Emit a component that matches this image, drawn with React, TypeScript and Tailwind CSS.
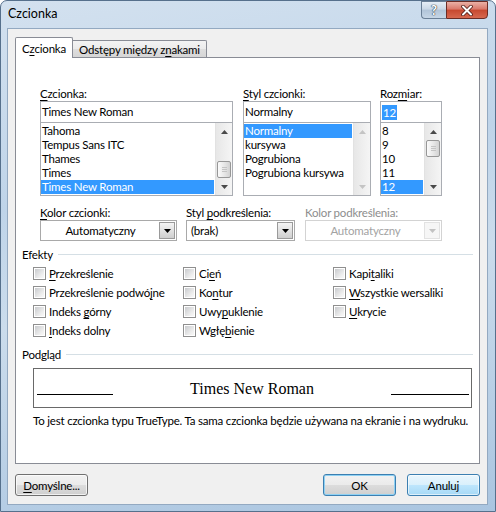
import React from "react";

const SANS = "font-['Lato','Noto_Sans',sans-serif]";

function Acc({ t, i }: { t: string; i: number }) {
  if (i < 0) return <>{t}</>;
  return (
    <>
      {t.slice(0, i)}
      <span className="underline decoration-1 underline-offset-[2px]">{t[i]}</span>
      {t.slice(i + 1)}
    </>
  );
}

function Tri({ up, color }: { up?: boolean; color: string }) {
  return (
    <svg width="7" height="4" viewBox="0 0 7 4">
      <path d={up ? "M0 4L3.5 0L7 4Z" : "M0 0L3.5 4L7 0Z"} fill={color} />
    </svg>
  );
}

function Thumb() {
  return (
    <div className="h-[17px] mx-px rounded-[2px] border border-[#979797] bg-[linear-gradient(to_right,#fbfbfb,#e4e4e4_60%,#d2d2d2)] flex flex-col items-center justify-center gap-px">
      <div className="w-[5px] h-px bg-[#c4c4c4]" />
      <div className="w-[5px] h-px bg-[#c4c4c4]" />
      <div className="w-[5px] h-px bg-[#c4c4c4]" />
    </div>
  );
}

function VScroll({ thumb, disabled }: { thumb: "top" | "bottom" | "none"; disabled?: boolean }) {
  const c = disabled ? "#c4c4c4" : "#4a4a4a";
  return (
    <div className="w-[17px] h-full flex flex-col bg-[linear-gradient(to_right,#e7e7e7,#f5f5f5)] border-l border-[#e2e2e2]">
      <div className="h-[17px] flex items-center justify-center">
        <Tri up color={c} />
      </div>
      <div className="flex-1 flex flex-col">
        {thumb === "bottom" && <div className="flex-1" />}
        {thumb !== "none" && <Thumb />}
      </div>
      <div className="h-[17px] flex items-center justify-center">
        <Tri color={c} />
      </div>
    </div>
  );
}

function ListBox({
  items,
  sel,
  thumb,
  disabled,
}: {
  items: string[];
  sel: number;
  thumb: "top" | "bottom" | "none";
  disabled?: boolean;
}) {
  return (
    <div className="h-[74px] -mt-px border border-[#aaadb3] bg-white flex">
      <div className="flex-1 pt-px pr-px">
        {items.map((it, k) => (
          <div
            key={k}
            className={`h-[14px] leading-[14px] pl-px whitespace-nowrap ${
              k === sel ? "bg-[#3399ff] text-white" : ""
            }`}
          >
            {it}
          </div>
        ))}
      </div>
      <VScroll thumb={thumb} disabled={disabled} />
    </div>
  );
}

function Label({ t, i, disabled }: { t: string; i: number; disabled?: boolean }) {
  return (
    <div className={`h-[15px] leading-[15px] whitespace-nowrap ${disabled ? "text-[#8d8d8d]" : ""}`}>
      <Acc t={t} i={i} />
    </div>
  );
}

function Combo({ text, center, disabled }: { text: string; center?: boolean; disabled?: boolean }) {
  return (
    <div
      className={`h-[21px] border ${
        disabled ? "border-[#d3d3d3]" : "border-[#a9a9a9]"
      } bg-white flex items-stretch p-px`}
    >
      <div
        className={`flex-1 flex items-center whitespace-nowrap ${center ? "justify-center" : "pl-[3px]"} ${
          disabled ? "text-[#a3a3a3]" : ""
        }`}
      >
        {text}
      </div>
      <div
        className={`w-[16px] border flex items-center justify-center ${
          disabled
            ? "border-[#e2e2e2] bg-[#f6f6f6]"
            : "border-[#9a9a9a] bg-[linear-gradient(to_bottom,#f4f4f4,#e2e2e2_50%,#cfcfcf)]"
        }`}
      >
        <Tri color={disabled ? "#c2c2c2" : "#000"} />
      </div>
    </div>
  );
}

function Check({ t, i }: { t: string; i: number }) {
  return (
    <div className="h-[19px] flex items-center gap-[3px] whitespace-nowrap">
      <div className="w-[13px] h-[13px] border border-[#8f8f8f] bg-white p-px shrink-0">
        <div className="w-full h-full bg-[linear-gradient(135deg,#c9cbce,#eeeeee_70%,#f8f8f8)]" />
      </div>
      <span className="leading-[15px]">
        <Acc t={t} i={i} />
      </span>
    </div>
  );
}

function Btn({
  children,
  kind,
}: {
  children: React.ReactNode;
  kind: "normal" | "default" | "hover";
}) {
  const cls =
    kind === "normal"
      ? "border-[#707070] bg-[linear-gradient(to_bottom,#f2f2f2_0%,#ebebeb_50%,#dddddd_50%,#cfcfcf_100%)]"
      : kind === "default"
      ? "border-[#3c7fb1] bg-[linear-gradient(to_bottom,#f2f2f2_0%,#ebebeb_50%,#dddddd_50%,#cfcfcf_100%)] shadow-[inset_0_0_0_1px_#8fd1f3]"
      : "border-[#3c7fb1] bg-[linear-gradient(to_bottom,#eaf6fd_0%,#d9f0fc_50%,#bee6fd_50%,#a7d9f5_100%)] shadow-[inset_0_0_0_1px_rgba(255,255,255,0.6)]";
  return (
    <div
      className={`w-[73px] h-[22px] rounded-[3px] border flex items-center justify-center leading-[15px] ${
        kind === "normal" ? "shadow-[inset_0_0_0_1px_rgba(255,255,255,0.7)]" : ""
      } ${cls}`}
    >
      {children}
    </div>
  );
}

function GroupHead({ t }: { t: string }) {
  return (
    <div className="h-[15px] flex items-center">
      <span className="leading-[15px]">{t}</span>
      <div className="flex-1 h-px bg-[#d5dfe5] ml-[5px]" />
    </div>
  );
}

export default function App() {
  return (
    <div
      className={`${SANS} text-[11.5px] tracking-[-0.2px] text-black w-[496px] h-[512px] overflow-hidden rounded-t-[7px] border border-[#56708c] bg-[linear-gradient(170deg,#d3e1ef_0%,#bfd4e9_35%,#cbdcec_55%,#aac5e0_100%)] flex flex-col`}
    >
      {/* Title bar */}
      <div className="h-[27px] flex items-start shrink-0">
        <div className="pl-[7px] h-[26px] flex items-center text-[12.5px] leading-[18px] tracking-normal">Czcionka</div>
        <div className="ml-auto mr-[7px] flex">
          <div className="w-[25px] h-[18px] rounded-bl-[4px] border border-[#6a7f96] border-r-0 bg-[linear-gradient(to_bottom,#e6eef6_0%,#cad8e6_45%,#b1c4d8_50%,#c6d6e6_100%)] flex items-center justify-center text-white font-bold text-[13px] leading-[13px] [text-shadow:0_0_1px_#34404c,0_0_1px_#34404c,0_0_1px_#34404c]">
            ?
          </div>
          <div className="w-[42px] h-[18px] rounded-br-[4px] border border-[#6b2c25] bg-[linear-gradient(to_bottom,#eab1a6_0%,#d9786a_45%,#c7482f_50%,#d7684f_100%)] flex items-center justify-center">
            <svg width="14" height="11" viewBox="0 0 14 11">
              <path d="M3 1.5L11 9.5M11 1.5L3 9.5" stroke="#4d1a14" strokeWidth="3.6" strokeLinecap="round" />
              <path d="M3 1.5L11 9.5M11 1.5L3 9.5" stroke="#ffffff" strokeWidth="2" strokeLinecap="round" />
            </svg>
          </div>
        </div>
      </div>

      {/* Client area */}
      <div className="ml-[6px] w-[481px] h-[477px] shrink-0 border border-[#93a9c1] bg-[#f0f0f0] pl-[7px] pt-[8px] flex flex-col">
        {/* Tabs */}
        <div className="h-[20px] flex items-end">
          <div className="relative z-10 w-[58px] h-[21px] -mb-px border border-b-0 border-[#898c95] rounded-t-[2px] bg-white flex items-center justify-center leading-[15px]">
            <Acc t="Czcionka" i={1} />
          </div>
          <div className="w-[134px] h-[17px] border border-b-0 border-l-0 border-[#898c95] rounded-tr-[2px] bg-[linear-gradient(to_bottom,#f3f3f3,#ebebeb_50%,#dedede_50%,#d6d6d6)] flex items-center justify-center leading-[15px] whitespace-nowrap">
            <Acc t="Odstępy między znakami" i={16} />
          </div>
        </div>

        {/* Panel */}
        <div className="w-[465px] h-[407px] border border-[#898c95] bg-white px-[6px] flex flex-col">
          {/* Row 1 */}
          <div className="mt-[28px] ml-[18px] flex">
            <div className="w-[193px]">
              <Label t="Czcionka:" i={0} />
              <div className="h-[22px] border border-[#aaadb3] bg-white flex items-center pl-px">Times New Roman</div>
              <ListBox
                items={["Tahoma", "Tempus Sans ITC", "Thames", "Times", "Times New Roman"]}
                sel={4}
                thumb="bottom"
              />
            </div>
            <div className="w-[128px] ml-[10px]">
              <Label t="Styl czcionki:" i={0} />
              <div className="h-[22px] border border-[#aaadb3] bg-white flex items-center pl-px">Normalny</div>
              <ListBox
                items={["Normalny", "kursywa", "Pogrubiona", "Pogrubiona kursywa"]}
                sel={0}
                thumb="none"
                disabled
              />
            </div>
            <div className="w-[62px] ml-[9px]">
              <Label t="Rozmiar:" i={3} />
              <div className="h-[22px] border border-[#aaadb3] bg-white flex items-center pl-px">
                <span className="bg-[#3399ff] text-white leading-[15px] px-px">12</span>
              </div>
              <ListBox items={["8", "9", "10", "11", "12"]} sel={4} thumb="top" />
            </div>
          </div>

          {/* Row 2 */}
          <div className="mt-[9px] ml-[18px] flex">
            <div className="w-[137px]">
              <Label t="Kolor czcionki:" i={0} />
              <Combo text="Automatyczny" center />
            </div>
            <div className="w-[109px] ml-[9px]">
              <Label t="Styl podkreślenia:" i={5} />
              <Combo text="(brak)" />
            </div>
            <div className="w-[137px] ml-[10px]">
              <Label t="Kolor podkreślenia:" i={-1} disabled />
              <Combo text="Automatyczny" center disabled />
            </div>
          </div>

          {/* Efekty */}
          <div className="mt-[6px]">
            <GroupHead t="Efekty" />
          </div>
          <div className="mt-[2px] ml-[11px] grid grid-cols-[150px_150px_1fr]">
            <div className="flex flex-col">
              <Check t="Przekreślenie" i={0} />
              <Check t="Przekreślenie podwójne" i={19} />
              <Check t="Indeks górny" i={7} />
              <Check t="Indeks dolny" i={0} />
            </div>
            <div className="flex flex-col">
              <Check t="Cień" i={2} />
              <Check t="Kontur" i={2} />
              <Check t="Uwypuklenie" i={3} />
              <Check t="Wgłębienie" i={4} />
            </div>
            <div className="flex flex-col">
              <Check t="Kapitaliki" i={4} />
              <Check t="Wszystkie wersaliki" i={0} />
              <Check t="Ukrycie" i={0} />
            </div>
          </div>

          {/* Podgląd */}
          <div className="mt-[7px]">
            <GroupHead t="Podgląd" />
          </div>
          <div className="mt-[6px] ml-[11px] mr-px h-[40px] border border-[#696969] bg-white flex items-start pl-[3px] pr-[2px]">
            <div className="w-[76px] h-px bg-black mt-[25px]" />
            <div className="flex-1 text-center font-['Liberation_Serif',serif] text-[16px] tracking-normal leading-[18px] pt-[11px] whitespace-nowrap">
              Times New Roman
            </div>
            <div className="w-[78px] h-px bg-black mt-[25px]" />
          </div>
          <div className="mt-[5px] ml-[11px] h-[15px] leading-[15px] whitespace-nowrap">
            To jest czcionka typu TrueType. Ta sama czcionka będzie używana na ekranie i na wydruku.
          </div>
        </div>

        {/* Buttons */}
        <div className="mt-[10px] w-[465px] flex items-center">
          <Btn kind="normal">
            <Acc t="Domyślne..." i={0} />
          </Btn>
          <div className="ml-auto flex gap-[11px]">
            <Btn kind="default">OK</Btn>
            <Btn kind="hover">Anuluj</Btn>
          </div>
        </div>
      </div>
    </div>
  );
}
